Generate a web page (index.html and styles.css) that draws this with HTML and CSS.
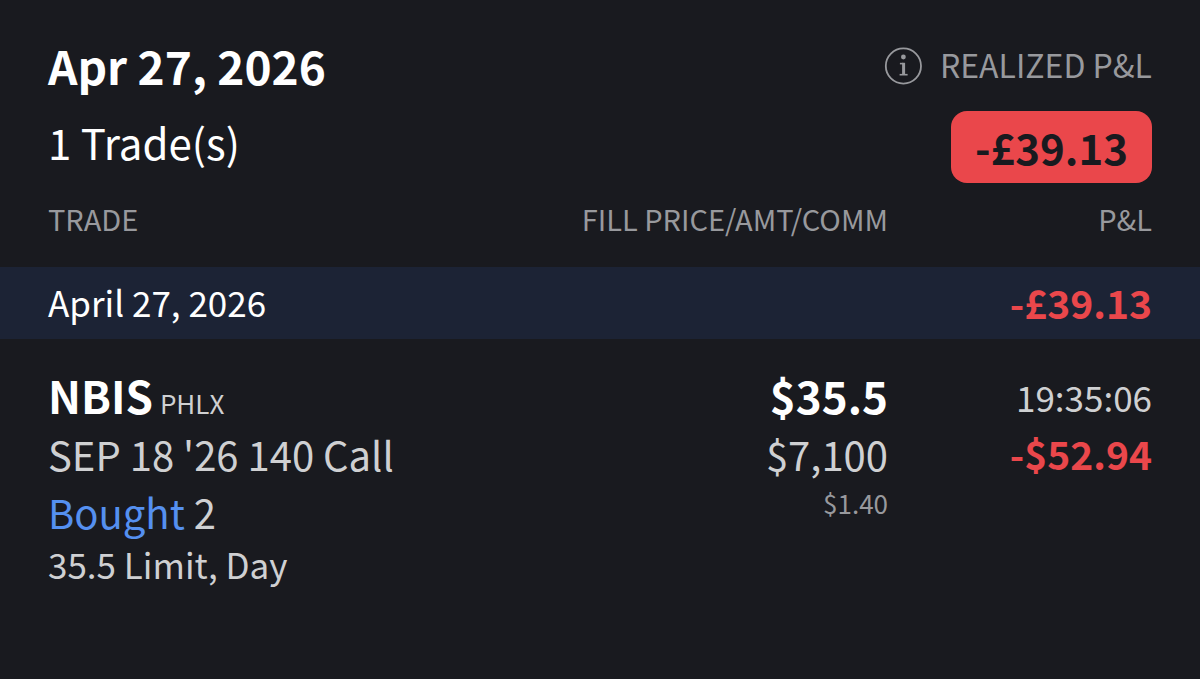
FILE: index.html
```html
<!DOCTYPE html>
<html lang="en">
<head>
    <meta charset="UTF-8">
    <meta name="viewport" content="width=device-width, initial-scale=1.0">
    <title>Trades</title>
    <link rel="stylesheet" href="styles.css">
</head>
<body>
    <header class="summary">
        <div>
            <h1>Apr 27, 2026</h1>
            <p class="trade-count">1 Trade(s)</p>
        </div>
        <div class="realized">
            <div class="realized-label">
                <button type="button" class="info" aria-label="About realized P&amp;L">
                    <svg viewBox="0 0 38 38" width="38" height="38" fill="none" stroke="currentColor">
                        <circle cx="19.4" cy="19" r="17.6" stroke-width="1.8"/>
                        <circle cx="19.4" cy="10" r="2.4" fill="currentColor" stroke="none"/>
                        <path d="M15.9 16.6H19.4" stroke-width="1.6"/>
                        <path d="M19.6 15.8V28" stroke-width="3"/>
                        <path d="M15.6 27.7h8" stroke-width="1.6"/>
                    </svg>
                </button>
                <span>REALIZED P&amp;L</span>
            </div>
            <strong class="badge">-£39.13</strong>
        </div>
    </header>

    <table class="trades">
        <thead>
            <tr>
                <th class="col-trade">TRADE</th>
                <th class="col-price">FILL PRICE/AMT/COMM</th>
                <th class="col-pnl">P&amp;L</th>
            </tr>
        </thead>
        <tbody>
            <tr class="day">
                <td colspan="2">April 27, 2026</td>
                <td class="loss">-£39.13</td>
            </tr>
            <tr class="trade">
                <td>
                    <div class="symbol">NBIS<span class="exchange">PHLX</span></div>
                    <div class="contract">SEP 18 '26 140 Call</div>
                    <div class="action"><span class="bought">Bought</span> 2</div>
                    <div class="order">35.5 Limit, Day</div>
                </td>
                <td>
                    <div class="price">$35.5</div>
                    <div class="amount">$7,100</div>
                    <div class="commission">$1.40</div>
                </td>
                <td>
                    <div class="time">19:35:06</div>
                    <div class="loss">-$52.94</div>
                </td>
            </tr>
        </tbody>
    </table>
</body>
</html>
```

FILE: styles.css
```css
* {
    box-sizing: border-box;
}
body {
    margin: 0;
    background-color: #191a1f;
    color: #ffffff;
    font-family: "Noto Sans CJK SC", "Noto Sans", sans-serif;
}
h1, p {
    margin: 0;
}
.summary {
    display: flex;
    justify-content: space-between;
    padding: 26px 48px 0;
}
h1 {
    font-size: 46px;
    font-weight: 700;
    line-height: 78px;
}
.trade-count {
    font-size: 42px;
    line-height: 76px;
}
.realized {
    display: flex;
    flex-direction: column;
    align-items: flex-end;
    gap: 5px;
}
.realized-label {
    display: flex;
    align-items: center;
    gap: 18px;
    height: 80px;
    color: #98999d;
    font-size: 32px;
    line-height: 76px;
}
.realized-label span {
    align-self: flex-start;
}
.info {
    display: flex;
    padding: 0;
    border: 0;
    background: none;
    color: inherit;
    cursor: pointer;
}
.badge {
    padding: 0 24px;
    border-radius: 16px;
    background-color: #ea474b;
    color: #191a1f;
    font-size: 42px;
    font-weight: 700;
    line-height: 72px;
}
.trades {
    width: 100%;
    border-collapse: collapse;
    table-layout: fixed;
}
th, td {
    padding: 0;
    text-align: right;
    vertical-align: top;
}
th {
    height: 84px;
    color: #98999d;
    font-size: 29px;
    font-weight: 400;
    line-height: 70px;
}
th:first-child, td:first-child {
    padding-left: 48px;
    text-align: left;
}
th:last-child, td:last-child {
    padding-right: 48px;
}
.col-trade {
    width: 42%;
}
.col-price {
    width: 32%;
}
.col-pnl {
    width: 26%;
}
.day {
    background-color: #1c2335;
}
.day td {
    height: 72px;
    font-size: 35px;
    line-height: 70px;
}
.trades .loss {
    color: #ea474b;
    font-size: 39px;
    font-weight: 700;
}
.trade td {
    padding-top: 26px;
    color: #cfd0d2;
}
.symbol, .price {
    color: #ffffff;
    font-size: 44px;
    font-weight: 700;
    line-height: 60px;
}
.exchange {
    margin-left: 7px;
    color: #cfd0d2;
    font-size: 26px;
    font-weight: 400;
    line-height: 1;
}
.contract, .action, .amount {
    font-size: 40px;
    line-height: 58px;
}
.bought {
    color: #5590f0;
}
.order {
    font-size: 35px;
    line-height: 46px;
}
.commission {
    color: #98999d;
    font-size: 26px;
    line-height: 40px;
}
.time {
    font-size: 35px;
    line-height: 64px;
}
.trade .loss {
    line-height: 48px;
}
```
